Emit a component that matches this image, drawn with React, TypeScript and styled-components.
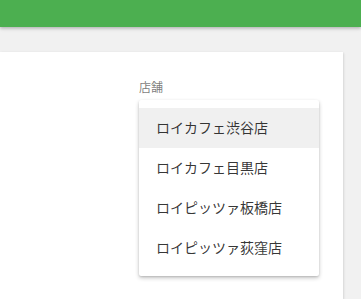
import React from "react";
import styled, { createGlobalStyle } from "styled-components";

const Global = createGlobalStyle`
  html, body { margin: 0; padding: 0; }
  body {
    background: #f1f1f1;
    font-family: Roboto, "Noto Sans CJK JP", sans-serif;
    overflow: hidden;
  }
`;

const Page = styled.div`
  position: relative;
  width: 361px;
  height: 299px;
  display: flex;
  flex-direction: column;
`;

const AppBar = styled.header`
  height: 27px;
  flex: none;
  background: #4caf50;
  box-shadow: 0 1px 3px rgba(0,0,0,0.2), 0 2px 4px rgba(0,0,0,0.1);
  position: relative;
  z-index: 2;
`;

const Main = styled.main`
  flex: 1;
  padding: 25px 18px 0 0;
  display: flex;
`;

const Card = styled.section`
  flex: 1;
  background: #fff;
  box-shadow: 0 1px 3px rgba(0,0,0,0.1), 1px 1px 2px rgba(0,0,0,0.06);
  padding: 29px 0 0 139px;
`;

const Label = styled.label`
  display: block;
  font-size: 12px;
  line-height: 14px;
  color: rgba(0,0,0,0.54);
`;

const Menu = styled.ul`
  position: absolute;
  left: 139px;
  top: 100px;
  width: 180px;
  margin: 0;
  padding: 8px 0;
  list-style: none;
  background: #fff;
  border-radius: 2px;
  box-shadow: 0 2px 4px rgba(0,0,0,0.22), 0 1px 2px rgba(0,0,0,0.12);
  z-index: 3;
`;

const Item = styled.li<{ $selected?: boolean }>`
  height: 40px;
  box-sizing: border-box;
  display: flex;
  align-items: center;
  padding: 0 16px 3px 17px;
  font-size: 14px;
  color: rgba(0,0,0,0.8);
  background: ${(p) => (p.$selected ? "#f0f0f0" : "transparent")};
  white-space: nowrap;
`;

const stores = ["ロイカフェ渋谷店", "ロイカフェ目黒店", "ロイピッツァ板橋店", "ロイピッツァ荻窪店"];

export default function App() {
  return (
    <>
      <Global />
      <Page>
        <AppBar />
        <Main>
          <Card>
            <Label>店舗</Label>
          </Card>
        </Main>
        <Menu>
          {stores.map((s, i) => (
            <Item key={s} $selected={i === 0}>
              {s}
            </Item>
          ))}
        </Menu>
      </Page>
    </>
  );
}
